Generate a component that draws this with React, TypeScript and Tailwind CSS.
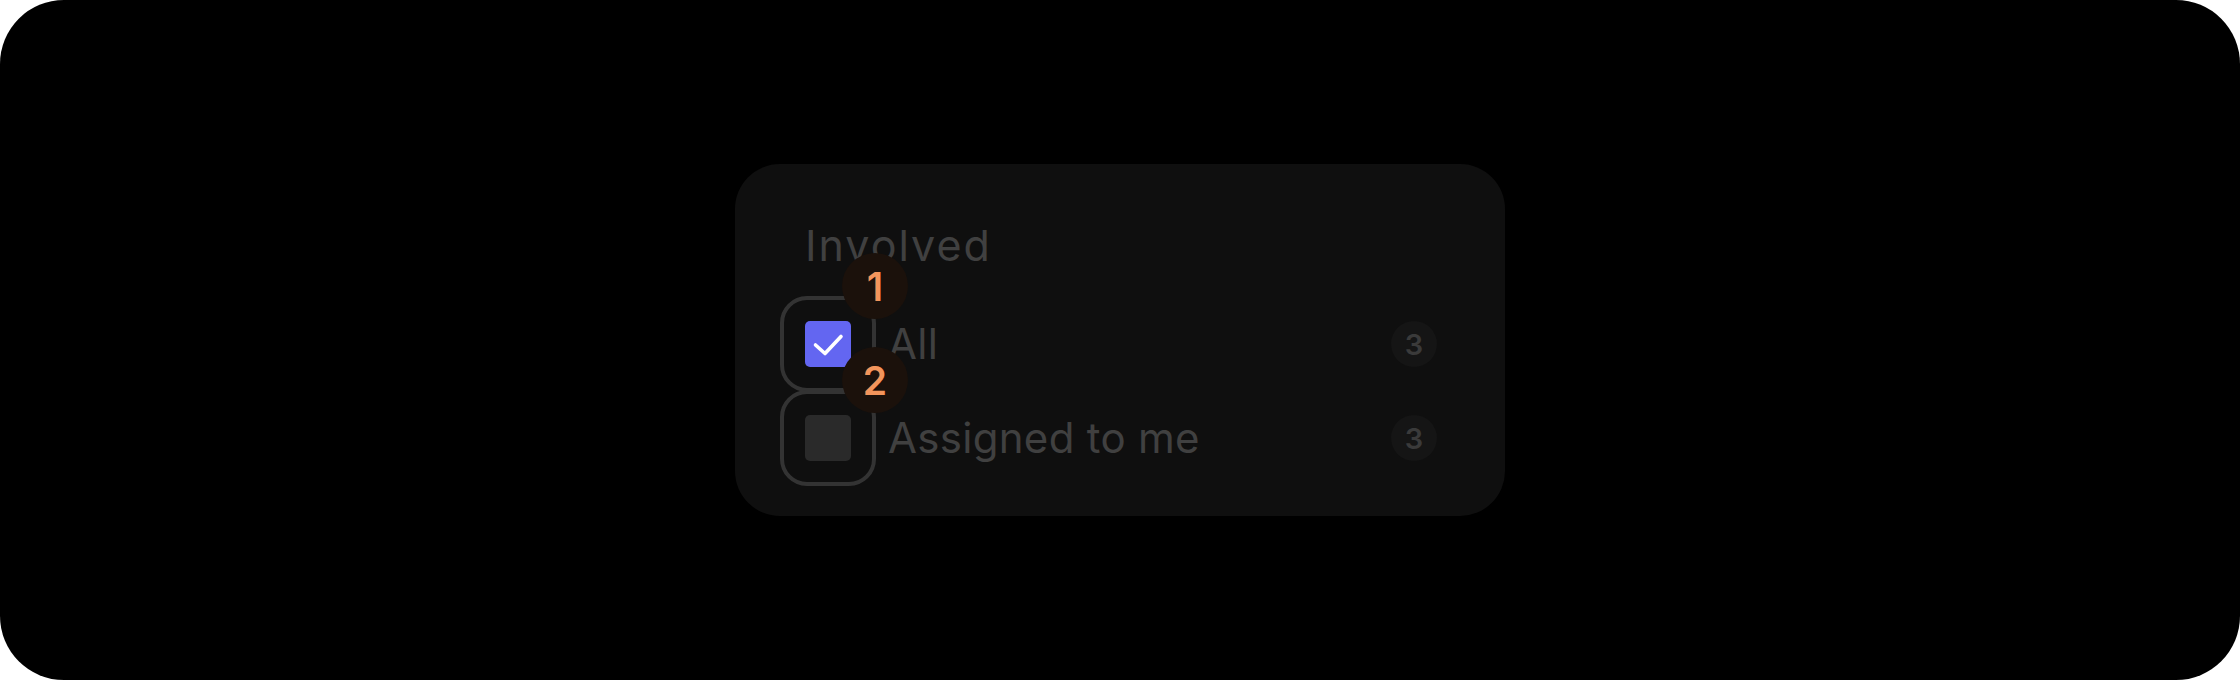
import React from "react";

function Check() {
  return (
    <svg width="46" height="46" viewBox="0 0 46 46" fill="none">
      <path d="M10.5 24 L20 32.5 L36 15.5" stroke="#ffffff" strokeWidth="3.6" strokeLinecap="round" strokeLinejoin="round" />
    </svg>
  );
}

function Row({ label, checked, marker }: { label: string; checked: boolean; marker: string }) {
  return (
    <div className="flex h-[94px] items-center">
      <div className="relative h-[46px] w-[46px] shrink-0">
        <div className="absolute -inset-[25px] rounded-[27px] border-[4px] border-[#333333]" />
        <div className={"relative h-[46px] w-[46px] rounded-[5px] " + (checked ? "bg-[#6366f1]" : "bg-[#2a2a2a]")}>
          {checked ? <Check /> : null}
        </div>
        <div className="absolute left-[37px] top-[-68px] z-10 flex h-[66px] w-[66px] items-center justify-center rounded-full bg-[#1b110b] text-[39px] font-semibold leading-none text-[#f3955c]">
          {marker}
        </div>
      </div>
      <div className="ml-[37px] flex-1 text-[42px] leading-[50px] tracking-[0.3px] text-[#404040]">{label}</div>
      <div className="flex h-[46px] w-[46px] items-center justify-center rounded-full bg-[#151515] text-[29px] font-semibold leading-none text-[#3a3a3a]">
        3
      </div>
    </div>
  );
}

export default function App() {
  return (
    <div className="h-[680px] w-[2240px] bg-white" style={{ fontFamily: "Inter, 'Noto Sans', sans-serif" }}>
      <div className="flex h-full w-full items-center justify-center rounded-[64px] bg-black">
        <div className="flex h-[352px] w-[770px] flex-col rounded-[45px] bg-[#0f0f0f] pl-[70px] pr-[68px] pt-[56px] pb-[30px]">
          <div className="text-[43px] leading-[51px] tracking-[2px] text-[#404040]">Involved</div>
          <div className="mt-[26px] flex flex-col">
            <Row label="All" checked={true} marker="1" />
            <Row label="Assigned to me" checked={false} marker="2" />
          </div>
        </div>
      </div>
    </div>
  );
}
